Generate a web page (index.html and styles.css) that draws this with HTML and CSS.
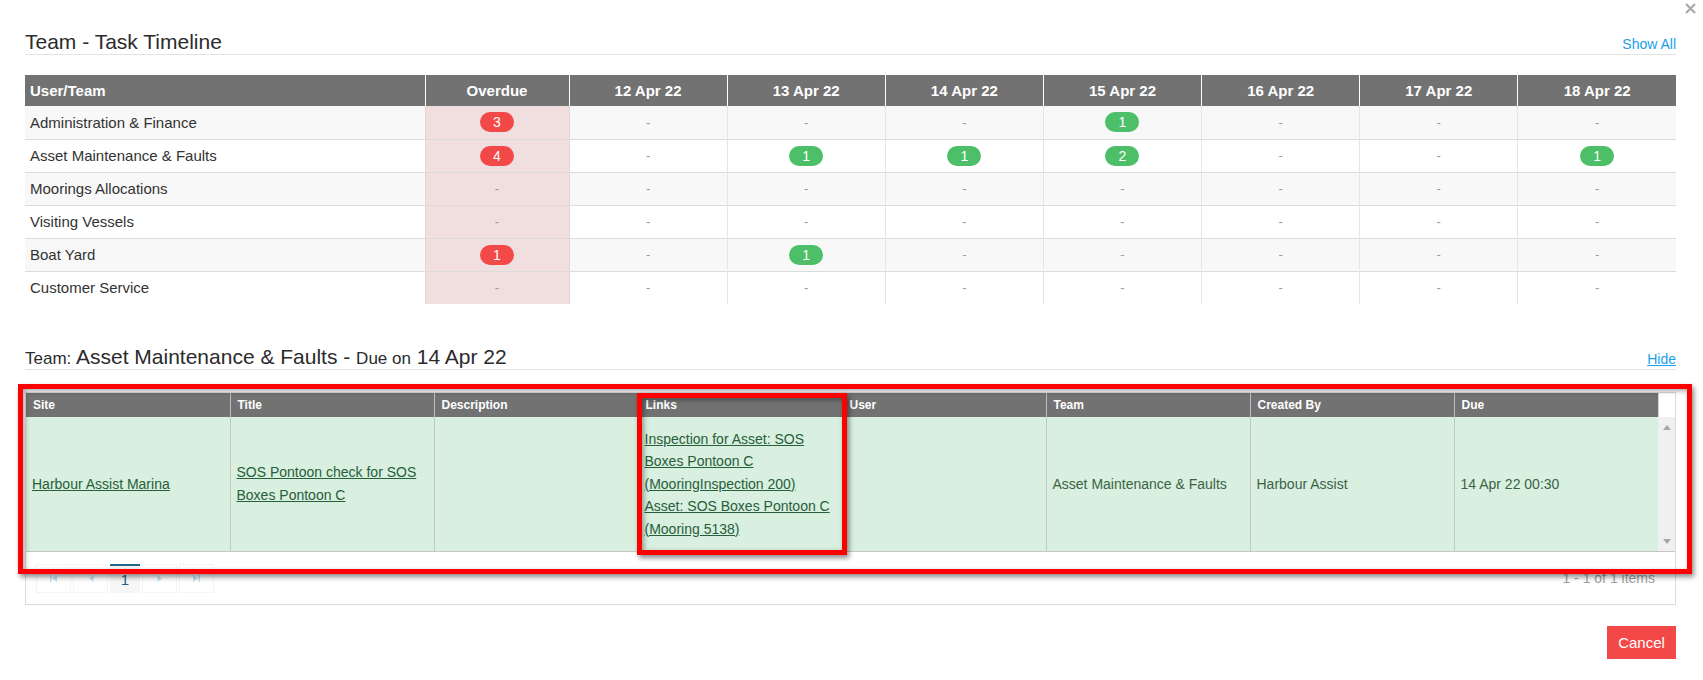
FILE: index.html
```html
<!DOCTYPE html>
<html lang="en">
<head>
<meta charset="utf-8">
<title>Team - Task Timeline</title>
<link rel="stylesheet" href="styles.css">
</head>
<body>
<div class="modal">
  <button class="close" type="button" aria-label="Close">
    <svg width="11" height="11" viewBox="0 0 11 11"><path d="M1 1L10 10M10 1L1 10" stroke="#a9a9a9" stroke-width="2.2" fill="none"/></svg>
  </button>

  <section class="panel panel-timeline">
    <div class="panel-head">
      <h2 class="panel-title">Team - Task Timeline</h2>
      <a class="head-link" href="#">Show All</a>
    </div>
    <table class="timeline">
      <colgroup>
        <col class="c-team"><col class="c-overdue">
        <col><col><col><col><col><col><col>
      </colgroup>
      <thead>
        <tr>
          <th class="th-left">User/Team</th>
          <th>Overdue</th>
          <th>12 Apr 22</th>
          <th>13 Apr 22</th>
          <th>14 Apr 22</th>
          <th>15 Apr 22</th>
          <th>16 Apr 22</th>
          <th>17 Apr 22</th>
          <th>18 Apr 22</th>
        </tr>
      </thead>
      <tbody>
        <tr>
          <td class="name">Administration &amp; Finance</td>
          <td class="od"><span class="badge red">3</span></td>
          <td class="dash">-</td><td class="dash">-</td><td class="dash">-</td>
          <td><span class="badge green">1</span></td>
          <td class="dash">-</td><td class="dash">-</td><td class="dash">-</td>
        </tr>
        <tr>
          <td class="name">Asset Maintenance &amp; Faults</td>
          <td class="od"><span class="badge red">4</span></td>
          <td class="dash">-</td>
          <td><span class="badge green">1</span></td>
          <td><span class="badge green">1</span></td>
          <td><span class="badge green">2</span></td>
          <td class="dash">-</td><td class="dash">-</td>
          <td><span class="badge green">1</span></td>
        </tr>
        <tr>
          <td class="name">Moorings Allocations</td>
          <td class="od dash">-</td>
          <td class="dash">-</td><td class="dash">-</td><td class="dash">-</td><td class="dash">-</td><td class="dash">-</td><td class="dash">-</td><td class="dash">-</td>
        </tr>
        <tr>
          <td class="name">Visiting Vessels</td>
          <td class="od dash">-</td>
          <td class="dash">-</td><td class="dash">-</td><td class="dash">-</td><td class="dash">-</td><td class="dash">-</td><td class="dash">-</td><td class="dash">-</td>
        </tr>
        <tr>
          <td class="name">Boat Yard</td>
          <td class="od"><span class="badge red">1</span></td>
          <td class="dash">-</td>
          <td><span class="badge green">1</span></td>
          <td class="dash">-</td><td class="dash">-</td><td class="dash">-</td><td class="dash">-</td><td class="dash">-</td>
        </tr>
        <tr>
          <td class="name">Customer Service</td>
          <td class="od dash">-</td>
          <td class="dash">-</td><td class="dash">-</td><td class="dash">-</td><td class="dash">-</td><td class="dash">-</td><td class="dash">-</td><td class="dash">-</td>
        </tr>
      </tbody>
    </table>
  </section>

  <section class="panel panel-detail">
    <div class="panel-head">
      <h2 class="panel-title mixed"><span class="sm">Team:</span> Asset Maintenance &amp; Faults - <span class="sm">Due on</span> 14 Apr 22</h2>
      <a class="head-link underline" href="#">Hide</a>
    </div>

    <div class="grid-wrap">
      <div class="grid">
        <div class="grid-header">
          <table class="gtable">
            <colgroup><col><col><col><col><col><col><col><col></colgroup>
            <thead>
              <tr>
                <th>Site</th><th>Title</th><th>Description</th><th>Links</th>
                <th>User</th><th>Team</th><th>Created By</th><th>Due</th>
              </tr>
            </thead>
          </table>
          <div class="head-gutter"></div>
        </div>
        <div class="grid-body">
          <table class="gtable">
            <colgroup><col><col><col><col><col><col><col><col></colgroup>
            <tbody>
              <tr class="row-success">
                <td><a href="#">Harbour Assist Marina</a></td>
                <td><a href="#">SOS Pontoon check for SOS Boxes Pontoon C</a></td>
                <td></td>
                <td class="links">
                  <a href="#">Inspection for Asset: SOS Boxes Pontoon C (MooringInspection 200)</a>
                  <a href="#">Asset: SOS Boxes Pontoon C (Mooring 5138)</a>
                </td>
                <td></td>
                <td>Asset Maintenance &amp; Faults</td>
                <td>Harbour Assist</td>
                <td>14 Apr 22 00:30</td>
              </tr>
            </tbody>
          </table>
          <div class="vscroll">
            <svg width="8" height="5" viewBox="0 0 8 5"><path d="M0 5L4 0L8 5Z" fill="#a8a8a8"/></svg>
            <svg width="8" height="5" viewBox="0 0 8 5"><path d="M0 0L8 0L4 5Z" fill="#a8a8a8"/></svg>
          </div>
        </div>
        <div class="pager">
          <div class="pager-nav">
            <span class="pbtn wide"><svg width="9" height="9" viewBox="0 0 9 9"><path d="M1 1h1.5v7H1zM8 1v7L3 4.5z" fill="#c4e1f0"/></svg></span>
            <span class="pbtn wide"><svg width="6" height="9" viewBox="0 0 6 9"><path d="M5.5 1v7L1 4.5z" fill="#c4e1f0"/></svg></span>
            <span class="pbtn current">1</span>
            <span class="pbtn wide"><svg width="6" height="9" viewBox="0 0 6 9"><path d="M0.5 1v7L5 4.5z" fill="#c4e1f0"/></svg></span>
            <span class="pbtn wide"><svg width="9" height="9" viewBox="0 0 9 9"><path d="M1 1v7L6 4.5zM6.5 1H8v7H6.5z" fill="#c4e1f0"/></svg></span>
          </div>
          <span class="pager-info">1 - 1 of 1 items</span>
        </div>
      </div>
      <div class="annot annot-grid"></div>
      <div class="annot annot-links"></div>
    </div>
  </section>

  <div class="footer">
    <button class="btn-cancel" type="button">Cancel</button>
  </div>
</div>
</body>
</html>
```

FILE: styles.css
```css
* { box-sizing: border-box; }

html, body {
  margin: 0;
  padding: 0;
  background: #fff;
}

body {
  font-family: "Liberation Sans", Arial, sans-serif;
  color: #333;
  font-size: 14px;
}

.modal {
  position: relative;
  width: 1703px;
  padding: 0 27px 0 25px;
}

.close {
  position: absolute;
  top: 3px;
  right: 7px;
  width: 11px;
  height: 11px;
  padding: 0;
  border: 0;
  background: none;
  display: flex;
}

/* panel headings */
.panel-timeline { padding-top: 30px; }
.panel-detail { margin-top: 41px; }

.panel-head {
  display: flex;
  align-items: baseline;
  justify-content: space-between;
  border-bottom: 1px solid #e3e3e3;
}

.panel-title {
  margin: 0;
  font-size: 21px;
  line-height: 24px;
  font-weight: normal;
  color: #2b2b2b;
}

.panel-title .sm { font-size: 17px; line-height: 1; }

.head-link {
  font-size: 14px;
  color: #1ba0ea;
  text-decoration: none;
}
.head-link.underline { text-decoration: underline; }

/* timeline table */
.timeline {
  margin-top: 20px;
  width: 1651px;
  table-layout: fixed;
  border-collapse: collapse;
  font-size: 15px;
}

.timeline .c-team { width: 400px; }
.timeline .c-overdue { width: 144px; }

.timeline th {
  background: #727272;
  color: #fff;
  font-weight: bold;
  height: 31px;
  padding: 0 5px;
  text-align: center;
  border-left: 1px solid #fff;
}
.timeline th:first-child { border-left: 0; }
.timeline th.th-left { text-align: left; }

.timeline td {
  height: 33px;
  padding: 0 5px;
  text-align: center;
  vertical-align: middle;
  border-top: 1px solid #dcdcdc;
  border-left: 1px solid #e6e6e6;
  color: #333;
}
.timeline tbody tr:first-child td { border-top: 0; }
.timeline td:first-child { border-left: 0; text-align: left; }

.timeline tbody tr:nth-child(odd) td { background: #f8f8f8; }
.timeline tbody tr td.od { background: #f1dedf; border-left-color: #e4d6d7; }
.timeline tbody tr td.od + td { border-left-color: #e4d6d7; }

.timeline td.dash { color: #9a9a9a; font-size: 13px; }

.badge {
  display: inline-block;
  min-width: 34px;
  height: 20px;
  line-height: 20px;
  border-radius: 10px;
  color: #fff;
  font-size: 14px;
  text-align: center;
  vertical-align: middle;
}
.badge.red { background: #f24848; }
.badge.green { background: #4cbf68; }

/* detail grid */
.grid-wrap {
  position: relative;
  margin-top: 22px;
}

.grid {
  width: 1651px;
  border: 1px solid #dcdcdc;
}

.grid-header, .grid-body {
  display: flex;
}

.gtable {
  width: 1632px;
  flex: none;
  table-layout: fixed;
  border-collapse: collapse;
}

.gtable col { width: 204px; }

.gtable th {
  background: #727272;
  color: #fff;
  font-size: 12px;
  font-weight: bold;
  text-align: left;
  height: 24px;
  padding: 0 7px;
  border-left: 1px solid #bdbdbd;
}
.gtable th:first-child { border-left: 0; }

.head-gutter {
  flex: 1;
  background: #fff;
  border-left: 1px solid #d6d6d6;
}

.gtable td {
  height: 134px;
  padding: 0 6px;
  vertical-align: middle;
  font-size: 14px;
  line-height: 22.5px;
  color: #3b6446;
  background: #d9efdf;
  border-left: 1px solid #c6c6c6;
  border-bottom: 1px solid #c6c6c6;
}
.gtable td:first-child { border-left: 0; }

.gtable td a {
  color: #25603a;
  text-decoration: underline;
}

.gtable td.links a { display: block; }

.vscroll {
  flex: 1;
  background: #f0f0f0;
  border-bottom: 1px solid #c6c6c6;
  display: flex;
  flex-direction: column;
  align-items: center;
  justify-content: space-between;
  padding: 8px 0 7px;
}

.pager {
  display: flex;
  align-items: center;
  justify-content: space-between;
  padding: 12px 20px 11px 10px;
}

.pager-nav {
  display: flex;
  gap: 2px;
}

.pbtn {
  height: 29px;
  width: 35px;
  display: flex;
  align-items: center;
  justify-content: center;
  border: 1px solid #f5f5f5;
  font-size: 15px;
}

.pbtn.current {
  width: 30px;
  background: #f6f6f6;
  border: 0;
  border-top: 2px solid #22678c;
  color: #1f5f86;
}

.pager-info {
  color: #a0a0a0;
  font-size: 14px;
}

/* highlight annotations drawn over the grid */
.annot {
  position: absolute;
  border: 5px solid #ff0000;
  box-shadow: 2px 3px 5px rgba(0, 0, 0, 0.45), inset 2px 2px 5px rgba(0, 0, 0, 0.35);
  pointer-events: none;
}

.annot-grid {
  left: -7px;
  top: -8px;
  width: 1674px;
  height: 190px;
}

.annot-links {
  left: 612px;
  top: 1px;
  width: 210px;
  height: 162px;
}

/* footer */
.footer {
  display: flex;
  justify-content: flex-end;
  margin-top: 21px;
}

.btn-cancel {
  width: 69px;
  height: 33px;
  border: 0;
  background: #f24848;
  color: #fff;
  font-family: "Liberation Sans", Arial, sans-serif;
  font-size: 15px;
  padding: 0;
}
```
